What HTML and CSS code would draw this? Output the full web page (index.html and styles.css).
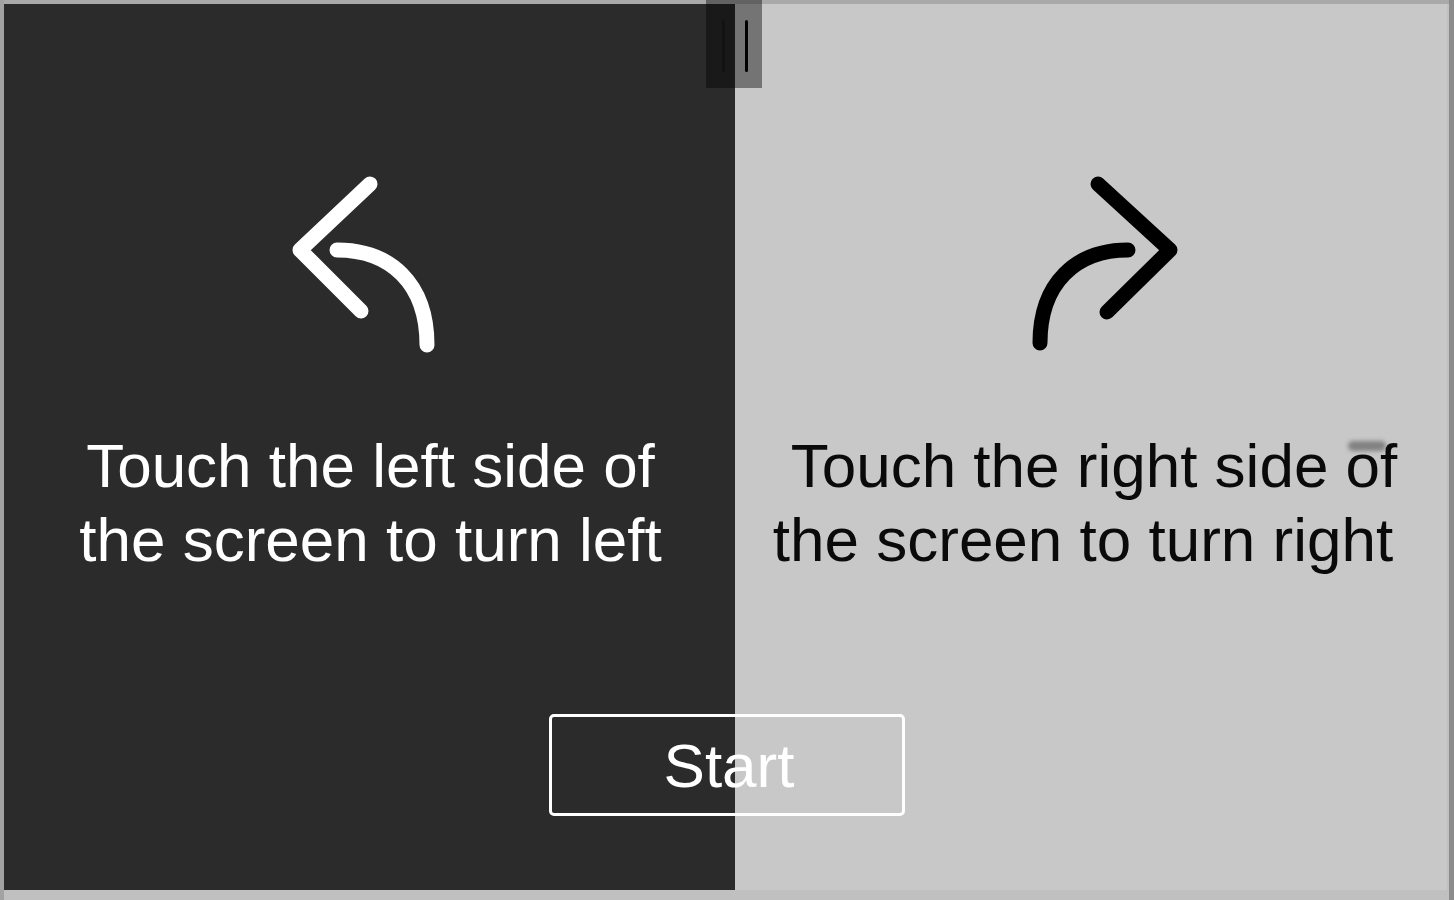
FILE: index.html
```html
<!DOCTYPE html>
<html lang="en">
<head>
<meta charset="utf-8">
<title>Turn controls</title>
<link rel="stylesheet" href="styles.css">
</head>
<body>
<div class="app">
  <section class="panel panel-left">
    <svg class="icon icon-left" width="170" height="200" viewBox="0 0 170 200" aria-hidden="true">
      <path d="M90 19 L20 85 L81 146" />
      <path d="M57 85 C110 85 147 118 147 180" />
    </svg>
    <p class="caption caption-left"><span class="line">Touch the left side of</span><span class="line">the screen to turn left</span></p>
  </section>
  <section class="panel panel-right">
    <svg class="icon icon-right" width="170" height="200" viewBox="0 0 170 200" aria-hidden="true">
      <path d="M78 19 L150 85 L87 147" />
      <path d="M108 85 C56 85 20 118 20 178" />
    </svg>
    <p class="caption caption-right"><span class="line line-first">Touch the right side of</span><span class="line">the screen to turn right</span></p>
  </section>
  <div class="handle"><span class="bar"></span><span class="bar bar-strong"></span></div>
  <button class="start" type="button">Start</button>
  <span class="smudge" aria-hidden="true"></span>
</div>
</body>
</html>
```

FILE: styles.css
```css
html, body {
  margin: 0;
  padding: 0;
}
body {
  background: #bdbdbd;
  font-family: "Liberation Sans", Arial, sans-serif;
}
.app {
  position: relative;
  width: 1454px;
  height: 900px;
  box-sizing: border-box;
  padding: 4px 7px 10px 4px;
  display: flex;
  background: linear-gradient(#a9a9a9, #a9a9a9) top / 100% 4px no-repeat, #c0c0c0;
  box-shadow: inset -5px 0 0 #8c8c8c, inset 4px 0 0 #a2a2a2;
}
.panel {
  display: flex;
  flex-direction: column;
  align-items: center;
}
.panel-left {
  width: 731px;
  background: #2b2b2b;
  color: #ffffff;
}
.panel-right {
  flex: 1;
  background: #c8c8c8;
  color: #0a0a0a;
}
.icon {
  display: block;
  margin-top: 161px;
  fill: none;
  stroke-width: 15;
  stroke-linecap: round;
  stroke-linejoin: round;
}
.icon-left {
  stroke: #ffffff;
  margin-right: 9px;
}
.icon-right {
  stroke: #000000;
  margin-left: 28px;
}
.caption {
  margin: 64px 0 0;
  font-size: 62px;
  line-height: 74px;
  text-align: center;
  white-space: nowrap;
}
.caption-left {
  margin-left: 2px;
}
.caption-right {
  margin-right: 16px;
}
.line {
  display: block;
}
.line-first {
  padding-left: 22px;
}
.handle {
  position: absolute;
  left: 706px;
  top: 0;
  width: 56px;
  height: 88px;
  box-sizing: border-box;
  padding: 20px 0 16px 16px;
  display: flex;
  gap: 20px;
  background: rgba(0, 0, 0, 0.42);
}
.bar {
  width: 3px;
  background: rgba(0, 0, 0, 0.25);
  border-radius: 2px;
}
.bar-strong {
  background: #000000;
}
.start {
  position: absolute;
  left: 549px;
  top: 714px;
  width: 356px;
  height: 102px;
  box-sizing: border-box;
  border: 3px solid #ffffff;
  border-radius: 5px;
  background: transparent;
  color: #ffffff;
  font-family: "Liberation Sans", Arial, sans-serif;
  font-size: 62px;
  padding: 0 0 0 4px;
  display: flex;
  align-items: center;
  justify-content: center;
}
.smudge {
  position: absolute;
  left: 1348px;
  top: 441px;
  width: 38px;
  height: 10px;
  border-radius: 5px;
  background: rgba(60, 60, 60, 0.5);
  filter: blur(2px);
}
```
